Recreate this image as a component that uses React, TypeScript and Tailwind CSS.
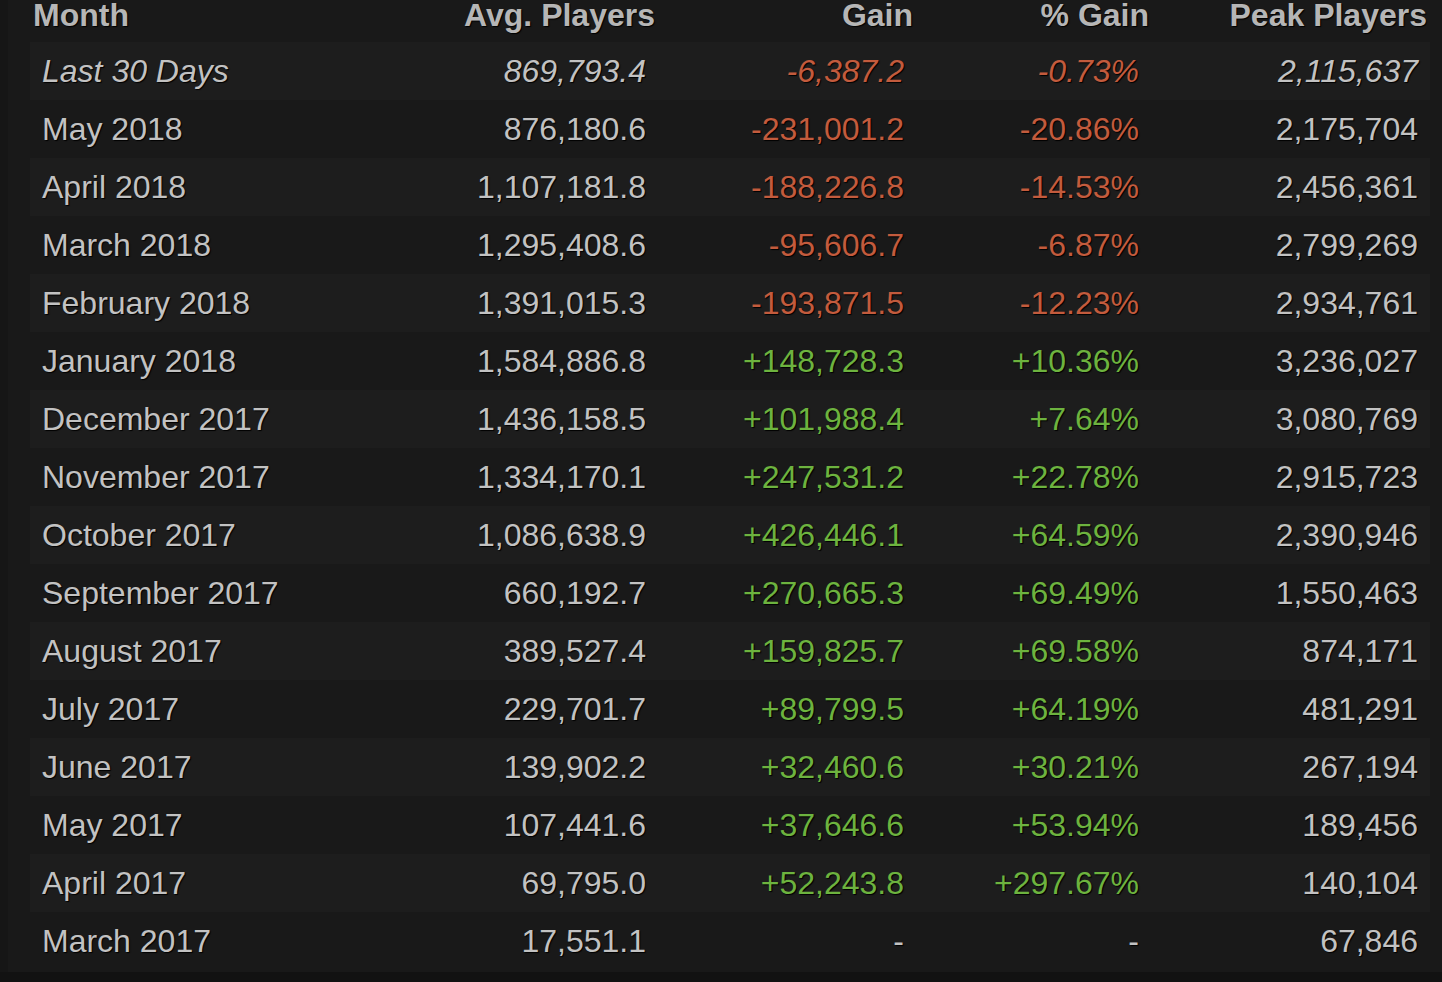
type Row = {
  month: string;
  avg: string;
  gain: string;
  pct: string;
  peak: string;
};

const rows: Row[] = [
  { month: "Last 30 Days", avg: "869,793.4", gain: "-6,387.2", pct: "-0.73%", peak: "2,115,637" },
  { month: "May 2018", avg: "876,180.6", gain: "-231,001.2", pct: "-20.86%", peak: "2,175,704" },
  { month: "April 2018", avg: "1,107,181.8", gain: "-188,226.8", pct: "-14.53%", peak: "2,456,361" },
  { month: "March 2018", avg: "1,295,408.6", gain: "-95,606.7", pct: "-6.87%", peak: "2,799,269" },
  { month: "February 2018", avg: "1,391,015.3", gain: "-193,871.5", pct: "-12.23%", peak: "2,934,761" },
  { month: "January 2018", avg: "1,584,886.8", gain: "+148,728.3", pct: "+10.36%", peak: "3,236,027" },
  { month: "December 2017", avg: "1,436,158.5", gain: "+101,988.4", pct: "+7.64%", peak: "3,080,769" },
  { month: "November 2017", avg: "1,334,170.1", gain: "+247,531.2", pct: "+22.78%", peak: "2,915,723" },
  { month: "October 2017", avg: "1,086,638.9", gain: "+426,446.1", pct: "+64.59%", peak: "2,390,946" },
  { month: "September 2017", avg: "660,192.7", gain: "+270,665.3", pct: "+69.49%", peak: "1,550,463" },
  { month: "August 2017", avg: "389,527.4", gain: "+159,825.7", pct: "+69.58%", peak: "874,171" },
  { month: "July 2017", avg: "229,701.7", gain: "+89,799.5", pct: "+64.19%", peak: "481,291" },
  { month: "June 2017", avg: "139,902.2", gain: "+32,460.6", pct: "+30.21%", peak: "267,194" },
  { month: "May 2017", avg: "107,441.6", gain: "+37,646.6", pct: "+53.94%", peak: "189,456" },
  { month: "April 2017", avg: "69,795.0", gain: "+52,243.8", pct: "+297.67%", peak: "140,104" },
  { month: "March 2017", avg: "17,551.1", gain: "-", pct: "-", peak: "67,846" },
];

const cols = "grid grid-cols-[370px_258px_258px_236px_278px]";

function tone(v: string) {
  if (v.startsWith("+")) return "text-[#6db33f]";
  if (v.length > 1 && v.startsWith("-")) return "text-[#c35b3d]";
  return "text-[#c2c2c2]";
}

export default function App() {
  return (
    <div
      className="flex h-[982px] w-full flex-col overflow-hidden bg-[#191919]"
      style={{ fontFamily: '"Liberation Sans", Arial, Helvetica, sans-serif' }}
    >
      <div className="flex flex-1">
        <div className="w-[8px] bg-[#161616]" />
        <div className="pl-[22px]">
          <div
            className={`${cols} h-[42px] pt-[1px] text-[32px] font-bold leading-[28px] text-[#b6b6b6] [text-shadow:1px_1px_1px_#000]`}
          >
            <div className="px-[3px]">Month</div>
            <div className="px-[3px] text-right">Avg. Players</div>
            <div className="px-[3px] text-right">Gain</div>
            <div className="px-[3px] text-right">% Gain</div>
            <div className="px-[3px] text-right">Peak Players</div>
          </div>
          {rows.map((r, i) => (
            <div
              key={r.month}
              className={`${cols} h-[58px] text-[32px] leading-[58px] text-[#c2c2c2] [text-shadow:1px_1px_1px_#000] ${
                i % 2 === 0 ? "bg-[#1d1d1d]" : "bg-[#191919]"
              } ${i === 0 ? "italic" : ""}`}
            >
              <div className="pl-[12px] whitespace-nowrap">{r.month}</div>
              <div className="pr-[12px] text-right">{r.avg}</div>
              <div className={`pr-[12px] text-right ${tone(r.gain)}`}>{r.gain}</div>
              <div className={`pr-[13px] text-right ${tone(r.pct)}`}>{r.pct}</div>
              <div className="pr-[12px] text-right">{r.peak}</div>
            </div>
          ))}
        </div>
      </div>
      <div className="h-[10px] bg-[#121212]" />
    </div>
  );
}
